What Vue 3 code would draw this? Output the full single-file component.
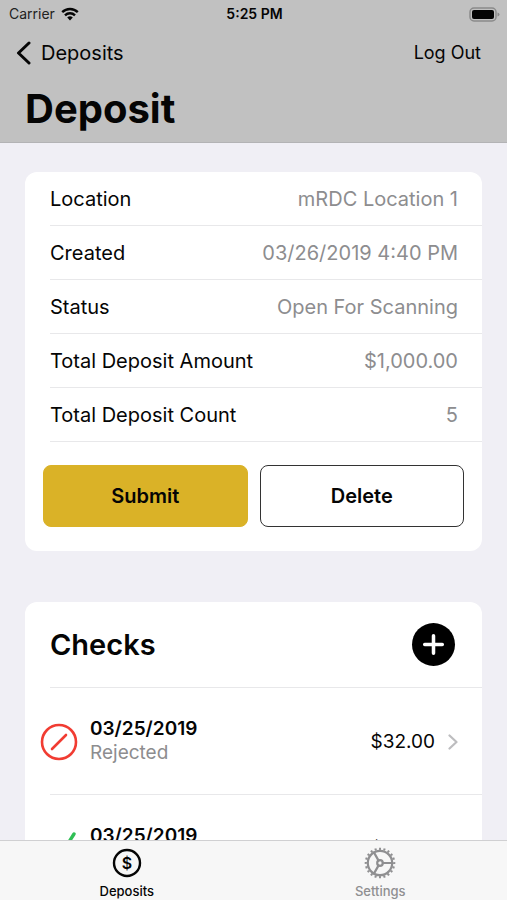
<script setup>
const details = [
  { label: 'Location', value: 'mRDC Location 1' },
  { label: 'Created', value: '03/26/2019 4:40 PM' },
  { label: 'Status', value: 'Open For Scanning' },
  { label: 'Total Deposit Amount', value: '$1,000.00' },
  { label: 'Total Deposit Count', value: '5' },
]

const checks = [
  { id: 1, date: '03/25/2019', status: 'Rejected', amount: '$32.00', rejected: true },
  { id: 2, date: '03/25/2019', status: 'Accepted', amount: '$32.00', rejected: false },
]
</script>

<template>
  <div class="screen">
    <header class="header">
      <div class="status-bar">
        <span class="carrier">
          Carrier
          <svg class="wifi" viewBox="0 0 18 14" aria-hidden="true">
            <path d="M1.2 5.2A11.2 11.2 0 0 1 16.8 5.2" />
            <path d="M4 8.3A7.2 7.2 0 0 1 14 8.3" />
            <path class="wifi-dot" d="M9 13.4L6.2 10.6A4 4 0 0 1 11.8 10.6Z" />
          </svg>
        </span>
        <span class="clock">5:25 PM</span>
        <svg class="battery" viewBox="0 0 31 15" aria-hidden="true">
          <rect class="battery-shell" x="1" y="1" width="26" height="13" rx="4" />
          <rect x="3" y="3" width="22" height="9" rx="2" />
          <path class="battery-cap" d="M28.5 5.5Q30.5 6 30.5 7.5T28.5 9.5Z" />
        </svg>
      </div>
      <nav class="nav">
        <a class="back" href="#deposits">
          <svg class="back-icon" viewBox="0 0 16 24" aria-hidden="true">
            <path d="M13 2L2.5 12L13 22" />
          </svg>
          Deposits
        </a>
        <button class="logout" type="button">Log Out</button>
      </nav>
      <h1 class="title">Deposit</h1>
    </header>

    <main class="content">
      <section class="card">
        <dl class="details">
          <div v-for="row in details" :key="row.label" class="detail">
            <dt>{{ row.label }}</dt>
            <dd>{{ row.value }}</dd>
          </div>
        </dl>
        <div class="actions">
          <button class="action primary" type="button">Submit</button>
          <button class="action" type="button">Delete</button>
        </div>
      </section>

      <section class="card">
        <div class="checks-head">
          <h2>Checks</h2>
          <button class="add" type="button" aria-label="Add check">
            <svg viewBox="0 0 44 44" aria-hidden="true">
              <path d="M22 13V31M13 22H31" />
            </svg>
          </button>
        </div>
        <ul class="checks">
          <li v-for="check in checks" :key="check.id">
            <a class="check" href="#check">
              <svg v-if="check.rejected" class="mark rejected" viewBox="0 0 38 38" aria-hidden="true">
                <circle cx="19" cy="19" r="17" />
                <path d="M12 26L26 12" />
              </svg>
              <svg v-else class="mark accepted" viewBox="0 0 38 38" aria-hidden="true">
                <path d="M6 23L15 34L34 4" />
              </svg>
              <span class="check-text">
                <span class="date">{{ check.date }}</span>
                <span class="state">{{ check.status }}</span>
              </span>
              <span class="amount">{{ check.amount }}</span>
              <svg class="chevron" viewBox="0 0 10 16" aria-hidden="true">
                <path d="M1.5 1.5L8.5 8L1.5 14.5" />
              </svg>
            </a>
          </li>
        </ul>
      </section>
    </main>

    <nav class="tabs">
      <a class="tab active" href="#deposits">
        <svg class="tab-icon" viewBox="0 0 32 32" aria-hidden="true">
          <circle cx="16" cy="16" r="13" />
          <text x="16" y="22" text-anchor="middle">$</text>
        </svg>
        Deposits
      </a>
      <a class="tab" href="#settings">
        <svg class="tab-icon gear" viewBox="0 0 32 32" aria-hidden="true">
          <circle cx="16" cy="16" r="12.2" />
          <circle class="teeth" cx="16" cy="16" r="14.2" pathLength="20" />
          <circle cx="16" cy="16" r="2.8" />
          <path d="M18.8 16H28M14.6 13.6L9.9 5.4M14.6 18.4L9.9 26.6" />
        </svg>
        Settings
      </a>
    </nav>
  </div>
</template>

<style>
body {
  background: #f0eff5;
}
</style>

<style scoped>
.screen {
  display: flex;
  flex-direction: column;
  height: 100vh;
  overflow: hidden;
  background: #f0eff5;
  color: #050505;
  font-family: Inter, "Liberation Sans", sans-serif;
  font-size: 20px;
  line-height: 24px;
}
.screen * {
  box-sizing: border-box;
}
a {
  color: inherit;
  text-decoration: none;
}
button {
  font: inherit;
  color: inherit;
  padding: 0;
  border: 0;
  background: none;
}
svg {
  display: block;
  flex: none;
  fill: none;
  stroke: currentColor;
  stroke-linecap: round;
  stroke-linejoin: round;
}
.header {
  flex: none;
  background: #c1c1c1;
  border-bottom: 1px solid #b3b3b5;
}
.status-bar {
  display: grid;
  grid-template-columns: 1fr auto 1fr;
  align-items: center;
  height: 28px;
  padding: 0 7px 0 9px;
  font-size: 14px;
  line-height: 20px;
}
.carrier {
  display: flex;
  align-items: center;
  gap: 6px;
  color: #222;
}
.wifi {
  width: 18px;
  height: 14px;
  color: #050505;
  stroke-width: 2.4;
  stroke-linecap: butt;
}
.wifi-dot {
  fill: currentColor;
  stroke: none;
}
.clock {
  font-weight: 600;
}
.battery {
  width: 31px;
  height: 15px;
  justify-self: end;
  fill: #050505;
  stroke: none;
}
.battery-shell {
  fill: none;
  stroke: #8a8a8a;
  stroke-width: 1.5;
}
.battery-cap {
  fill: #8a8a8a;
}
.nav {
  display: flex;
  align-items: center;
  justify-content: space-between;
  height: 50px;
  padding: 0 26px 0 16px;
}
.back {
  display: flex;
  align-items: center;
  gap: 9px;
}
.back-icon {
  width: 16px;
  height: 24px;
  stroke-width: 3;
}
.logout {
  font-size: 18px;
}
.title {
  margin: 0;
  padding: 7px 25px 9px;
  font-size: 40px;
  line-height: 48px;
  font-weight: 700;
}
.content {
  flex: 1;
  min-height: 0;
  overflow-y: auto;
  scrollbar-width: none;
  display: flex;
  flex-direction: column;
  gap: 51px;
  padding: 29px 25px;
}
.card {
  flex: none;
  border-radius: 12px;
  background: #fff;
}
.details {
  margin: 0;
  padding-left: 25px;
}
.detail {
  display: flex;
  align-items: center;
  justify-content: space-between;
  height: 54px;
  padding-right: 24px;
  border-bottom: 1px solid #e8e8ea;
}
dd {
  margin: 0;
  color: #8d8d8f;
}
.actions {
  display: grid;
  grid-template-columns: 1fr 1fr;
  gap: 12px;
  padding: 23px 18px 24px;
}
.action {
  height: 62px;
  border: 1px solid #333;
  border-radius: 8px;
  font-weight: 600;
}
.primary {
  border-color: #dab227;
  background: #dab227;
}
.checks-head {
  display: flex;
  align-items: center;
  justify-content: space-between;
  height: 86px;
  margin-left: 25px;
  padding-right: 27px;
  border-bottom: 1px solid #e8e8ea;
}
h2 {
  margin: 0;
  font-size: 29px;
  line-height: 36px;
  font-weight: 600;
}
.add {
  width: 43px;
  height: 43px;
  border-radius: 50%;
  background: #000;
  color: #fff;
}
.add svg {
  width: 100%;
  height: 100%;
  stroke-width: 3.6;
}
.checks {
  margin: 0;
  padding: 0;
  list-style: none;
}
.check {
  display: flex;
  align-items: center;
  height: 107px;
  padding: 0 24px 0 15px;
  background: linear-gradient(#e8e8ea, #e8e8ea) 25px 100% / 100% 1px no-repeat;
}
.mark {
  width: 38px;
  height: 38px;
  margin-right: 12px;
  stroke-width: 2.6;
}
.rejected {
  color: #f13c32;
}
.accepted {
  color: #2fbf55;
  stroke-width: 3.4;
}
.check-text {
  display: flex;
  flex: 1;
  flex-direction: column;
  padding-bottom: 2px;
}
.date {
  font-size: 19px;
  font-weight: 600;
}
.state {
  font-size: 19px;
  color: #8d8d8f;
}
.amount {
  margin-right: 13px;
  font-size: 19px;
}
.chevron {
  width: 10px;
  height: 16px;
  color: #bdbdbf;
  stroke-width: 2.2;
}
.tabs {
  display: grid;
  flex: none;
  grid-template-columns: 1fr 1fr;
  height: 60px;
  border-top: 1px solid #d0d0d2;
  background: #f7f7f7;
}
.tab {
  display: flex;
  flex-direction: column;
  align-items: center;
  gap: 4px;
  padding-top: 6px;
  font-size: 13px;
  line-height: 16px;
  font-weight: 500;
  color: #8f8f91;
}
.active {
  color: #050505;
}
.tab-icon {
  width: 32px;
  height: 32px;
  stroke-width: 2.4;
}
.tab-icon text {
  fill: currentColor;
  stroke: none;
  font-size: 16px;
  font-weight: 600;
}
.gear {
  stroke-width: 2.2;
}
.teeth {
  stroke-linecap: butt;
  stroke-dasharray: 0.45 0.55;
  stroke-dashoffset: 0.22;
}
</style>
